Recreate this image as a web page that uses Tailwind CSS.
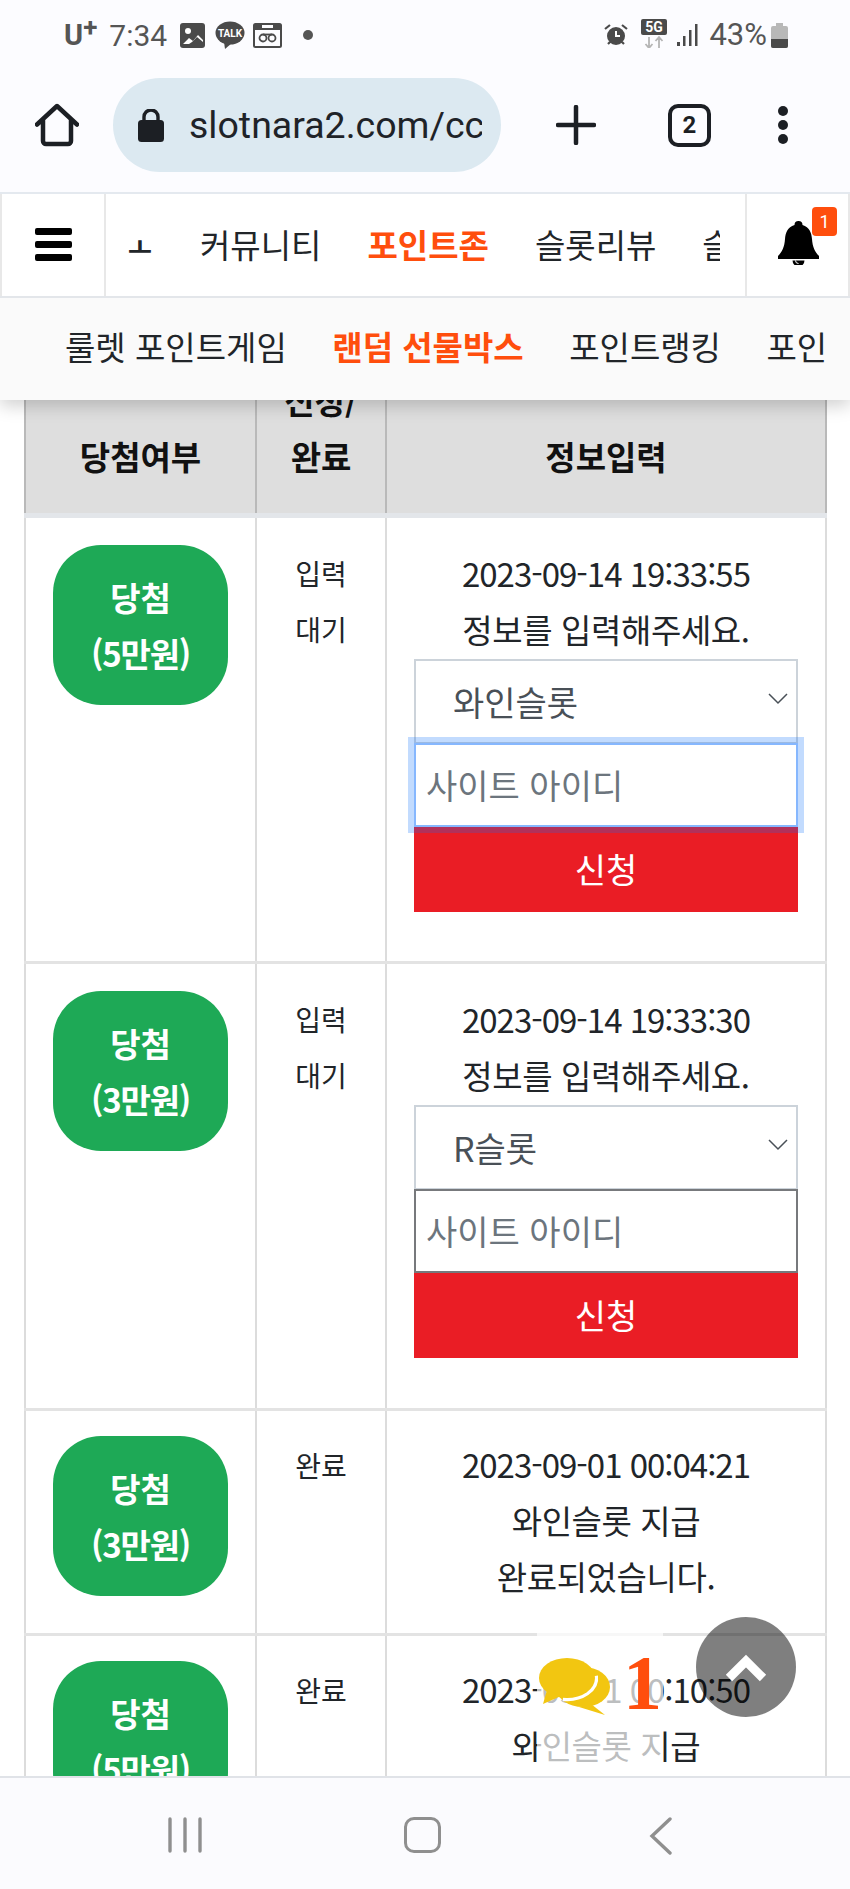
<!DOCTYPE html>
<html lang="ko">
<head>
<meta charset="UTF-8">
<title>slotnara2</title>
<script src="https://cdn.jsdelivr.net/npm/@tailwindcss/browser@4"></script>
</head>
<body class="bg-white font-['Noto_Sans_CJK_KR','Noto_Sans',sans-serif] text-[#212529]">
<div class="w-[850px] h-[1889px] overflow-hidden flex flex-col relative">

  <!-- status bar -->
  <div class="h-[60px] shrink-0 bg-[#fcfcff] flex items-center justify-between pl-[64px] pr-[62px] pt-[10px] text-[#555] font-['Roboto',sans-serif] text-[30px]">
    <div class="flex items-center">
      <span class="font-bold text-[29px] leading-none flex items-start">U<span class="text-[26px] leading-none mt-[-7px]">+</span></span>
      <span class="ml-[12px]">7:34</span>
      <svg class="ml-[13px]" width="25" height="25" viewBox="0 0 25 25"><rect width="25" height="25" rx="3" fill="#4a4a4a"/><circle cx="8" cy="8" r="3" fill="#fff"/><path d="M3 21l6-6 4 3 5-6 5 5v4H3z" fill="#fff"/><path d="M6 23l6-4 5-5 6 5v4z" fill="#4a4a4a"/></svg>
      <svg class="ml-[10px]" width="30" height="28" viewBox="0 0 30 28"><ellipse cx="15" cy="12" rx="14.500" ry="11.500" fill="#4a4a4a"/><path d="M9 21l1 7 7-6z" fill="#4a4a4a"/><text x="15" y="16" text-anchor="middle" font-size="10" font-weight="700" fill="#fff" font-family="Roboto">TALK</text></svg>
      <svg class="ml-[8px]" width="29" height="25" viewBox="0 0 29 25"><rect x="1" y="1" width="27" height="23" rx="1.500" fill="none" stroke="#4a4a4a" stroke-width="2"/><path d="M2 2h7v3h11V2h7v5H2z" fill="#4a4a4a"/><circle cx="10" cy="15" r="3.500" fill="none" stroke="#4a4a4a" stroke-width="1.800"/><circle cx="19" cy="15" r="3.500" fill="none" stroke="#4a4a4a" stroke-width="1.800"/><path d="M10 11.500h9" stroke="#4a4a4a" stroke-width="1.800"/></svg>
      <span class="ml-[21px] w-[10px] h-[10px] rounded-full bg-[#555]"></span>
    </div>
    <div class="flex items-center">
      <svg width="24" height="24" viewBox="0 0 24 24"><circle cx="12" cy="13" r="9" fill="#4a4a4a"/><path d="M12 8v5h4" fill="none" stroke="#fff" stroke-width="2"/><path d="M1 6l5-4M23 6l-5-4M4 21l2-2M20 21l-2-2" stroke="#4a4a4a" stroke-width="2.200"/></svg>
      <svg class="ml-[13px] mt-[-3px]" width="26" height="29" viewBox="0 0 26 29"><rect width="26" height="16" rx="2" fill="#4a4a4a"/><text x="13" y="13" text-anchor="middle" font-size="14" font-weight="700" fill="#fff" font-family="Roboto">5G</text><path d="M8 18v11M4.500 25l3.500 4 3.500-4M18 29V18M14.500 22l3.500-4 3.500 4" fill="none" stroke="#b5b5b5" stroke-width="1.800"/></svg>
      <svg class="ml-[10px]" width="21" height="24" viewBox="0 0 21 24"><rect x="0" y="19" width="3" height="4" fill="#4a4a4a"/><rect x="6" y="13" width="2.500" height="10" fill="#4a4a4a"/><rect x="12" y="7" width="2.500" height="16" fill="#4a4a4a"/><rect x="18" y="1" width="2.500" height="22" fill="#4a4a4a"/></svg>
      <span class="ml-[11px] text-[31px]">43%</span>
      <svg class="ml-[4px]" width="17" height="25" viewBox="0 0 17 25"><path d="M5 0h7v3h3a2 2 0 0 1 2 2v18a2 2 0 0 1-2 2H2a2 2 0 0 1-2-2V5a2 2 0 0 1 2-2h3z" fill="#b8b8b8"/><path d="M0 16h17v7a2 2 0 0 1-2 2H2a2 2 0 0 1-2-2z" fill="#4a4a4a"/></svg>
    </div>
  </div>

  <!-- browser toolbar -->
  <div class="h-[132px] shrink-0 bg-[#fcfcff] flex items-start pt-[18px]">
    <div class="w-[113px] h-[94px] flex items-center justify-center">
      <svg width="44" height="44" viewBox="0 0 44 44"><path d="M2 21.500L22 3l20 18.500M8 17v21a3 3 0 0 0 3 3h22a3 3 0 0 0 3-3V17" fill="none" stroke="#1c1f24" stroke-width="4.500" stroke-linecap="round" stroke-linejoin="round"/></svg>
    </div>
    <div class="w-[388px] h-[94px] rounded-full bg-[#dce9f1] flex items-center pl-[25px] pr-[19px] text-[#1f2328] font-['Roboto',sans-serif] text-[37.500px]">
      <svg class="shrink-0" width="26" height="33" viewBox="0 0 26 33"><path d="M6 13V8a7 7 0 0 1 14 0v5" fill="none" stroke="#1c1f24" stroke-width="3.400"/><rect y="11" width="26" height="22" rx="3.500" fill="#1c1f24"/></svg>
      <div class="ml-[25px] overflow-hidden whitespace-nowrap">slotnara2.com/cc</div>
    </div>
    <div class="flex-1 h-[94px] relative flex items-center">
      <svg class="ml-[55px]" width="40" height="40" viewBox="0 0 40 40"><path d="M20 2v36M2 20h36" stroke="#1c1f24" stroke-width="4.500" stroke-linecap="round"/></svg>
      <div class="ml-[72px] w-[43px] h-[43px] rounded-[10px] border-[4px] border-[#1c1f24] flex items-center justify-center font-['Roboto',sans-serif] font-bold text-[24px] text-[#1c1f24]">2</div>
      <div class="ml-[67px] flex flex-col gap-[4px]">
        <span class="w-[10px] h-[10px] rounded-full bg-[#1c1f24]"></span>
        <span class="w-[10px] h-[10px] rounded-full bg-[#1c1f24]"></span>
        <span class="w-[10px] h-[10px] rounded-full bg-[#1c1f24]"></span>
      </div>
    </div>
  </div>

  <!-- page viewport -->
  <div class="flex-1 relative overflow-hidden">
    <!-- fixed header -->
    <div class="relative z-10 shadow-[0_6px_16px_rgba(0,0,0,0.18)]">
      <div class="h-[106px] bg-white border-t-[2px] border-b-[2px] border-[#e3e6ea] border-t-[#e4e9ef] flex text-[33px] text-[#212529]">
        <div class="w-[106px] shrink-0 border-l-[2px] border-r-[2px] border-[#e8e8e8] flex items-center justify-center pb-[2px]">
          <div class="flex flex-col gap-[6px]">
            <span class="w-[37px] h-[7px] rounded-[2px] bg-black"></span>
            <span class="w-[37px] h-[7px] rounded-[2px] bg-black"></span>
            <span class="w-[37px] h-[7px] rounded-[2px] bg-black"></span>
          </div>
        </div>
        <div class="flex-1 overflow-hidden pl-[22px] mr-[25px] flex items-center gap-[46px] whitespace-nowrap">
          <span class="text-[26px] font-bold w-[26px] shrink-0">ㅗ</span>
          <span>커뮤니티</span>
          <span class="font-bold text-[#ff4e0d]">포인트존</span>
          <span>슬롯리뷰</span>
          <span>슬롯사이트</span>
        </div>
        <div class="w-[105px] shrink-0 border-l-[2px] border-r-[2px] border-[#e8e8e8] relative">
          <svg class="absolute left-[31px] top-[27px]" width="41" height="44" viewBox="0 0 41 44"><path d="M20.500 0a4 4 0 0 1 4 4c7 2 9 8 9.500 14 .5 8 3 13 7 17v3H0v-3c4-4 6.500-9 7-17 .5-6 2.500-12 9.500-14a4 4 0 0 1 4-4z" fill="#000"/><path d="M14.500 39.500a6 6 0 0 0 12 0z" fill="#000"/><path d="M17.500 39.500a3 3 0 0 0 3 3" fill="none" stroke="#fff" stroke-width="1"/></svg>
          <span class="absolute left-[65px] top-[13px] w-[25px] h-[29px] rounded-[4px] bg-[#ff4e0d] text-white text-[18px] leading-[29px] text-center font-['Roboto',sans-serif]">1</span>
        </div>
      </div>
      <div class="h-[102px] bg-[#fafafa] pl-[65px] pr-[22px] flex items-center text-[33px]">
        <div class="overflow-hidden flex gap-[45.500px] whitespace-nowrap w-full pb-[4px]">
          <span>룰렛 포인트게임</span>
          <span class="font-bold text-[#ff4e0d]">랜덤 선물박스</span>
          <span>포인트랭킹</span>
          <span>포인트내역</span>
        </div>
      </div>
    </div>

    <!-- table, scrolled under the header -->
    <div class="absolute left-[24px] top-[170px] w-[803px]">
      <table class="w-full border-collapse table-fixed text-[33px]">
        <colgroup><col class="w-[231px]"><col class="w-[130px]"><col></colgroup>
        <thead>
          <tr class="bg-[#dedede] border-b-[5px] border-[#e3e6ea] text-[#111]">
            <th class="border-x-[2px] border-[#b9b9b9] h-[153px] align-bottom pb-[29px] font-bold leading-[56px]">당첨여부</th>
            <th class="border-x-[2px] border-[#b9b9b9] align-bottom pb-[29px] font-bold leading-[56px]">신청/<br>완료</th>
            <th class="border-x-[2px] border-[#b9b9b9] align-bottom pb-[29px] font-bold leading-[56px]">정보입력</th>
          </tr>
        </thead>
        <tbody>
          <tr class="border-b-[3px] border-[#e3e3e3]">
            <td class="border-x-[2px] border-[#dcdcdc] h-[447px] align-top pt-[27px] px-[27px]">
              <div class="h-[160px] rounded-[48px] bg-[#1ea956] text-white font-bold text-center leading-[56px] py-[24px]">당첨<br><span class="tracking-[-1.200px]">(5만원)</span></div>
            </td>
            <td class="border-x-[2px] border-[#dcdcdc] align-top text-center pt-[27px] text-[28px] leading-[56px]">입력<br>대기</td>
            <td class="border-x-[2px] border-[#dcdcdc] align-top pt-[27px] px-[27px]">
              <div class="text-center leading-[56px] whitespace-nowrap tracking-[-0.4px]"><span class="tracking-[-1px]">2023-09-14 19:33:55</span><br>정보를 입력해주세요.</div>
              <div class="relative mt-[2px]">
                <select class="block w-full h-[85px] appearance-none bg-white border-[2px] border-[#ccd3da] pl-[37px] text-[34px] text-[#495057] outline-none"><option>와인슬롯</option></select>
                <svg class="absolute right-[10px] top-[34px]" width="20" height="12" viewBox="0 0 20 12"><path d="M1 1l9 9 9-9" fill="none" stroke="#495057" stroke-width="1.500"/></svg>
              </div>
              <input class="relative z-[1] block w-full h-[84px] mt-[-1px] bg-white border-[2px] border-[#86b7fe] pl-[10px] text-[34px] text-[#495057] placeholder:text-[#6c757d] outline-none shadow-[0_0_0_6px_rgba(13,110,253,0.25)]" placeholder="사이트 아이디">
              <div class="h-[85px] bg-[#ea1d25] text-white text-[34px] text-center leading-[84px]">신청</div>
            </td>
          </tr>
          <tr class="border-b-[3px] border-[#e3e3e3]">
            <td class="border-x-[2px] border-[#dcdcdc] h-[447px] align-top pt-[27px] px-[27px]">
              <div class="h-[160px] rounded-[48px] bg-[#1ea956] text-white font-bold text-center leading-[56px] py-[24px]">당첨<br><span class="tracking-[-1.200px]">(3만원)</span></div>
            </td>
            <td class="border-x-[2px] border-[#dcdcdc] align-top text-center pt-[27px] text-[28px] leading-[56px]">입력<br>대기</td>
            <td class="border-x-[2px] border-[#dcdcdc] align-top pt-[27px] px-[27px]">
              <div class="text-center leading-[56px] whitespace-nowrap tracking-[-0.4px]"><span class="tracking-[-1px]">2023-09-14 19:33:30</span><br>정보를 입력해주세요.</div>
              <div class="relative mt-[2px]">
                <select class="block w-full h-[85px] appearance-none bg-white border-[2px] border-[#ccd3da] pl-[37px] text-[34px] text-[#495057] outline-none"><option>R슬롯</option></select>
                <svg class="absolute right-[10px] top-[34px]" width="20" height="12" viewBox="0 0 20 12"><path d="M1 1l9 9 9-9" fill="none" stroke="#495057" stroke-width="1.500"/></svg>
              </div>
              <input class="relative z-[1] block w-full h-[84px] mt-[-1px] bg-white border-[2px] border-[#77797c] pl-[10px] text-[34px] text-[#495057] placeholder:text-[#6c757d] outline-none" placeholder="사이트 아이디">
              <div class="h-[85px] bg-[#ea1d25] text-white text-[34px] text-center leading-[84px]">신청</div>
            </td>
          </tr>
          <tr class="border-b-[3px] border-[#e3e3e3]">
            <td class="border-x-[2px] border-[#dcdcdc] h-[225px] align-top pt-[25px] px-[27px]">
              <div class="h-[160px] rounded-[48px] bg-[#1ea956] text-white font-bold text-center leading-[56px] py-[24px]">당첨<br><span class="tracking-[-1.200px]">(3만원)</span></div>
            </td>
            <td class="border-x-[2px] border-[#dcdcdc] align-top text-center pt-[26px] text-[28px] leading-[56px]">완료</td>
            <td class="border-x-[2px] border-[#dcdcdc] align-top text-center pt-[25px] leading-[56px] tracking-[-0.4px] whitespace-nowrap"><span class="tracking-[-1px]">2023-09-01 00:04:21</span><br>와인슬롯 지급<br>완료되었습니다.</td>
          </tr>
          <tr>
            <td class="border-x-[2px] border-[#dcdcdc] h-[225px] align-top pt-[25px] px-[27px]">
              <div class="h-[160px] rounded-[48px] bg-[#1ea956] text-white font-bold text-center leading-[56px] py-[24px]">당첨<br><span class="tracking-[-1.200px]">(5만원)</span></div>
            </td>
            <td class="border-x-[2px] border-[#dcdcdc] align-top text-center pt-[26px] text-[28px] leading-[56px]">완료</td>
            <td class="border-x-[2px] border-[#dcdcdc] align-top text-center pt-[25px] leading-[56px] tracking-[-0.4px] whitespace-nowrap"><span class="tracking-[-1px]">2023-09-01 00:10:50</span><br>와인슬롯 지급</td>
          </tr>
        </tbody>
      </table>
    </div>
  </div>

  <!-- floating chat box, over the table -->
  <div class="absolute left-[537px] top-[1633px] w-[126px] h-[143px] bg-white/70 z-20 flex items-start">
    <svg class="ml-[2px] mt-[25px] shrink-0" width="72" height="58" viewBox="0 0 72 58"><ellipse cx="44" cy="29" rx="27" ry="20" fill="#f2c611"/><path d="M52 46l14 11-26-8z" fill="#f2c611"/><path d="M56 18A28 20 0 0 1 24 40" fill="none" stroke="#fff" stroke-width="6"/><ellipse cx="28" cy="20" rx="28" ry="20" fill="#f2c611"/><path d="M8 32L4 46l18-8z" fill="#f2c611"/></svg>
    <span class="ml-[12px] mt-[7px] font-['Liberation_Serif',serif] font-bold text-[78px] leading-[86px] text-[#ff4e0d]">1</span>
  </div>
  <div class="absolute left-[696px] top-[1617px] w-[100px] h-[100px] rounded-full bg-black/50 z-20 flex items-center justify-center pt-[2px]">
    <svg width="44" height="28" viewBox="0 0 44 28"><path d="M5 24L22 7l17 17" fill="none" stroke="#fff" stroke-width="9"/></svg>
  </div>

  <!-- android nav bar -->
  <div class="absolute left-0 right-0 bottom-0 h-[113px] z-30 bg-[#fbfbfe] border-t-[2px] border-[#e0e3e8]">
    <svg class="absolute left-[167px] top-[39px]" width="36" height="36" viewBox="0 0 36 36"><path d="M3 2v32M18 2v32M33 2v32" stroke="#8f8f8f" stroke-width="3.400" stroke-linecap="round"/></svg>
    <div class="absolute left-[404px] top-[39px] w-[37px] h-[36px] rounded-[10px] border-[3px] border-[#8f8f8f]"></div>
    <svg class="absolute left-[649px] top-[39px]" width="24" height="38" viewBox="0 0 24 38"><path d="M21 2L3 19l18 17" fill="none" stroke="#8f8f8f" stroke-width="3.400" stroke-linecap="round"/></svg>
  </div>
</div>
</body>
</html>
